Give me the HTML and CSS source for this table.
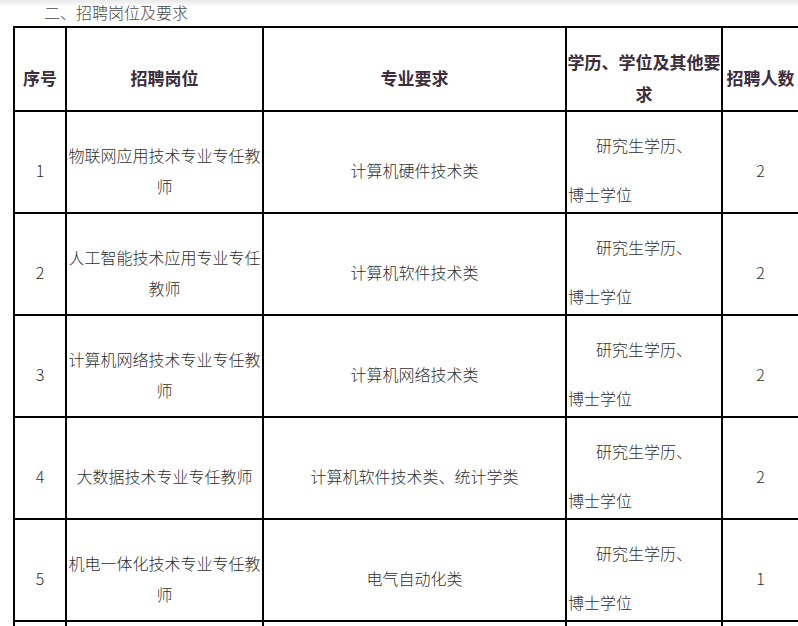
FILE: index.html
```html
<!DOCTYPE html>
<html lang="zh-CN">
<head>
<meta charset="utf-8">
<title>招聘岗位及要求</title>
<link rel="stylesheet" href="styles.css">
</head>
<body>
<div class="page">
  <div class="title">二、招聘岗位及要求</div>
  <table class="jobs">
    <thead>
      <tr>
        <th class="c1">序号</th>
        <th class="c2">招聘岗位</th>
        <th class="c3">专业要求</th>
        <th class="c4">学历、学位及其他要求</th>
        <th class="c5">招聘人数</th>
      </tr>
    </thead>
    <tbody>
      <tr>
        <td>1</td>
        <td>物联网应用技术专业专任教师</td>
        <td>计算机硬件技术类</td>
        <td class="edu"><div class="edu-a">研究生学历、</div><div class="edu-b">博士学位</div></td>
        <td>2</td>
      </tr>
      <tr>
        <td>2</td>
        <td>人工智能技术应用专业专任教师</td>
        <td>计算机软件技术类</td>
        <td class="edu"><div class="edu-a">研究生学历、</div><div class="edu-b">博士学位</div></td>
        <td>2</td>
      </tr>
      <tr>
        <td>3</td>
        <td>计算机网络技术专业专任教师</td>
        <td>计算机网络技术类</td>
        <td class="edu"><div class="edu-a">研究生学历、</div><div class="edu-b">博士学位</div></td>
        <td>2</td>
      </tr>
      <tr>
        <td>4</td>
        <td>大数据技术专业专任教师</td>
        <td>计算机软件技术类、统计学类</td>
        <td class="edu"><div class="edu-a">研究生学历、</div><div class="edu-b">博士学位</div></td>
        <td>2</td>
      </tr>
      <tr>
        <td>5</td>
        <td>机电一体化技术专业专任教师</td>
        <td>电气自动化类</td>
        <td class="edu"><div class="edu-a">研究生学历、</div><div class="edu-b">博士学位</div></td>
        <td>1</td>
      </tr>
      <tr class="cut">
        <td></td><td></td><td></td><td></td><td></td>
      </tr>
    </tbody>
  </table>
</div>
</body>
</html>
```

FILE: styles.css
```css
html {
  background: #fff linear-gradient(#e9e9e9, #ffffff 7px) no-repeat;
}
body {
  margin: 0;
  overflow: hidden;
  font-family: "Noto Sans CJK SC", "Noto Sans", sans-serif;
  font-weight: 300;
}
.page {
  padding-left: 13px;
}
.title {
  padding-left: 31px;
  height: 26px;
  line-height: 24px;
  font-size: 16px;
  color: #4a4a4a;
}
.jobs {
  table-layout: fixed;
  width: 785px;
  border-collapse: separate;
  border-spacing: 0;
  border-left: 2px solid #000;
  border-top: 2px solid #000;
}
.jobs th,
.jobs td {
  box-sizing: border-box;
  border-right: 2px solid #000;
  border-bottom: 2px solid #000;
  padding: 17px 0 0 0;
  text-align: center;
  vertical-align: middle;
  font-size: 16px;
  line-height: 31px;
  color: #2e2e2e;
  height: 102px;
}
.jobs th {
  height: 84px;
  padding-top: 18px;
  font-size: 17px;
  line-height: 32px;
  font-weight: 700;
  color: #3b2d3b;
}
.c1 { width: 52px; }
.c2 { width: 197px; }
.c3 { width: 303px; }
.c4 { width: 156px; }
.c5 { width: 77px; }
.jobs td.edu {
  padding-top: 18px;
  padding-bottom: 2px;
}
.edu-a {
  text-align: center;
  margin-bottom: 18px;
}
.edu-b {
  text-align: left;
  padding-left: 1px;
}
.jobs tr.cut td {
  height: 20px;
  padding: 0;
  border-bottom: none;
}
```
